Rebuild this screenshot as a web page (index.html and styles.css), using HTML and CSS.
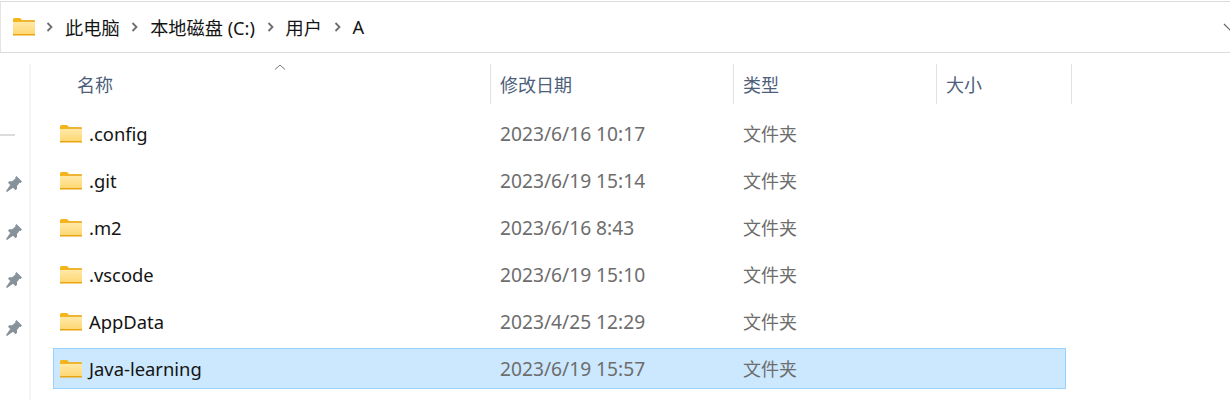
FILE: index.html
```html
<!DOCTYPE html>
<html lang="zh-CN">
<head>
  <meta charset="UTF-8" />
  <title>A - 文件资源管理器</title>
  <link rel="stylesheet" href="styles.css">
</head>
<body>
  <svg class="defs" width="0" height="0">
    <defs>
      <linearGradient id="folderFill" x1="0" y1="0" x2="0" y2="1">
        <stop offset="0" stop-color="#ffe9a8"/>
        <stop offset="1" stop-color="#ffd670"/>
      </linearGradient>
      <symbol id="folder" viewBox="0 0 22 18">
        <path d="M0 1.5Q0 0 1.5 0H7L9.5 2.5V4H0Z" fill="#f5b41a"/>
        <path d="M9 2H21Q22 2 22 3V5H0V4H7Z" fill="#eeb434"/>
        <rect y="4" width="22" height="13" fill="url(#folderFill)"/>
        <rect y="16" width="22" height="1.5" fill="#e8a510"/>
      </symbol>
      <symbol id="pin" viewBox="0 0 16 16">
        <path d="M10.5 0L16 5.5L14.6 7L13.6 6.8L11 10L11 13L9.5 14.2L2 6.8L3.2 5.2L6.2 5.2L9.4 2.4L9.2 1.4Z M4.2 9L7 11.8L1 16L0 15Z" fill="#87929a"/>
      </symbol>
    </defs>
  </svg>

  <div class="address-bar">
    <svg class="crumb-folder"><use href="#folder"/></svg>
    <span class="sep"><svg viewBox="0 0 7 10"><path d="M1.5 1L5.5 5L1.5 9" /></svg></span>
    <span class="crumb">此电脑</span>
    <span class="sep"><svg viewBox="0 0 7 10"><path d="M1.5 1L5.5 5L1.5 9" /></svg></span>
    <span class="crumb">本地磁盘 (C:)</span>
    <span class="sep"><svg viewBox="0 0 7 10"><path d="M1.5 1L5.5 5L1.5 9" /></svg></span>
    <span class="crumb">用户</span>
    <span class="sep"><svg viewBox="0 0 7 10"><path d="M1.5 1L5.5 5L1.5 9" /></svg></span>
    <span class="crumb">A</span>
    <svg class="dropdown" viewBox="0 0 14 8"><path d="M1 1L7 7L13 1"/></svg>
  </div>

  <div class="main">
    <div class="rail">
      <div class="rail-dash"></div>
      <svg class="pin"><use href="#pin"/></svg>
      <svg class="pin"><use href="#pin"/></svg>
      <svg class="pin"><use href="#pin"/></svg>
      <svg class="pin"><use href="#pin"/></svg>
    </div>

    <div class="list">
      <div class="head">
        <div class="col col-name">名称
          <svg class="sort" viewBox="0 0 12 6"><path d="M1 5.5L6 1L11 5.5"/></svg>
        </div>
        <div class="col col-date">修改日期</div>
        <div class="col col-type">类型</div>
        <div class="col col-size">大小</div>
      </div>

      <div class="row">
        <div class="name"><svg class="folder"><use href="#folder"/></svg>.config</div>
        <div class="date">2023/6/16 10:17</div>
        <div class="type">文件夹</div>
      </div>
      <div class="row">
        <div class="name"><svg class="folder"><use href="#folder"/></svg>.git</div>
        <div class="date">2023/6/19 15:14</div>
        <div class="type">文件夹</div>
      </div>
      <div class="row">
        <div class="name"><svg class="folder"><use href="#folder"/></svg>.m2</div>
        <div class="date">2023/6/16 8:43</div>
        <div class="type">文件夹</div>
      </div>
      <div class="row">
        <div class="name"><svg class="folder"><use href="#folder"/></svg>.vscode</div>
        <div class="date">2023/6/19 15:10</div>
        <div class="type">文件夹</div>
      </div>
      <div class="row">
        <div class="name"><svg class="folder"><use href="#folder"/></svg>AppData</div>
        <div class="date">2023/4/25 12:29</div>
        <div class="type">文件夹</div>
      </div>
      <div class="row selected">
        <div class="name"><svg class="folder"><use href="#folder"/></svg>Java-learning</div>
        <div class="date">2023/6/19 15:57</div>
        <div class="type">文件夹</div>
      </div>
    </div>
  </div>
</body>
</html>
```

FILE: styles.css
```css
html, body {
  height: 400px;
  overflow: hidden;
}
body {
  margin: 0;
  background: #fff;
  color: #141414;
  font-family: "Noto Sans", "Noto Sans CJK SC", sans-serif;
  font-size: 18px;
}
.defs {
  display: block;
  height: 0;
}

/* address bar */
.address-bar {
  display: flex;
  align-items: center;
  box-sizing: border-box;
  height: 52px;
  margin-top: 1px;
  padding-left: 12px;
  padding-bottom: 1px;
  border-top: 1px solid #dcdcdc;
  border-bottom: 1px solid #dcdcdc;
  border-left: 1px solid #e4e4e4;
  overflow: hidden;
}
.crumb-folder {
  width: 22px;
  height: 18px;
  margin-right: 11px;
}
.sep {
  display: flex;
  width: 7px;
  margin-right: 12px;
}
.sep svg {
  width: 7px;
  height: 10px;
  fill: none;
  stroke: #6e6e6e;
  stroke-width: 1.8;
}
.crumb {
  margin-right: 11.6px;
  font-size: 18.2px;
  white-space: nowrap;
}
.dropdown {
  width: 14px;
  height: 8px;
  margin-left: auto;
  margin-right: -7px;
  fill: none;
  stroke: #666;
  stroke-width: 1.2;
}

/* left rail with pins */
.main {
  display: flex;
  height: 347px;
}
.rail {
  display: flex;
  flex-direction: column;
  align-items: flex-start;
  box-sizing: border-box;
  width: 31px;
  margin-top: 11px;
  border-right: 2px solid #f5f5f5;
}
.rail-dash {
  width: 15px;
  height: 2px;
  margin-top: 70px;
  margin-bottom: 40px;
  background: #dcdcdc;
}
.pin {
  width: 16px;
  height: 16px;
  margin-left: 6px;
  margin-bottom: 32px;
}

/* file list */
.list {
  flex: 0 0 1041px;
  padding-top: 11px;
}
.head {
  display: flex;
  height: 40px;
  margin-bottom: 9px;
  color: #4c607a;
  font-size: 18px;
}
.col {
  display: flex;
  align-items: center;
  box-sizing: border-box;
  height: 40px;
  padding-bottom: 1px;
  border-right: 1px solid #e2e2e2;
}
.col-name {
  position: relative;
  width: 460px;
  padding-left: 46px;
}
.col-date {
  width: 243px;
  padding-left: 9px;
}
.col-type {
  width: 203px;
  padding-left: 9px;
}
.col-size {
  width: 135px;
  padding-left: 9px;
}
.sort {
  position: absolute;
  top: 0;
  left: 243px;
  width: 12px;
  height: 6px;
  fill: none;
  stroke: #777;
}

.row {
  display: flex;
  align-items: center;
  box-sizing: border-box;
  width: 1013px;
  height: 41px;
  margin-left: 22px;
  margin-bottom: 6px;
  border: 1px solid transparent;
}
.row.selected {
  background: #cce8ff;
  border-color: #99d1ff;
}
.name {
  display: flex;
  align-items: center;
  width: 446px;
  padding-left: 6px;
  font-size: 18.4px;
  white-space: nowrap;
}
.name, .date {
  flex: none;
  box-sizing: border-box;
}
.folder {
  width: 22px;
  height: 18px;
  margin-right: 7px;
}
.date {
  width: 243px;
  color: #6d6d6d;
  font-size: 19.2px;
  white-space: nowrap;
}
.type {
  padding-bottom: 2px;
  color: #6d6d6d;
  font-size: 18px;
}
```
